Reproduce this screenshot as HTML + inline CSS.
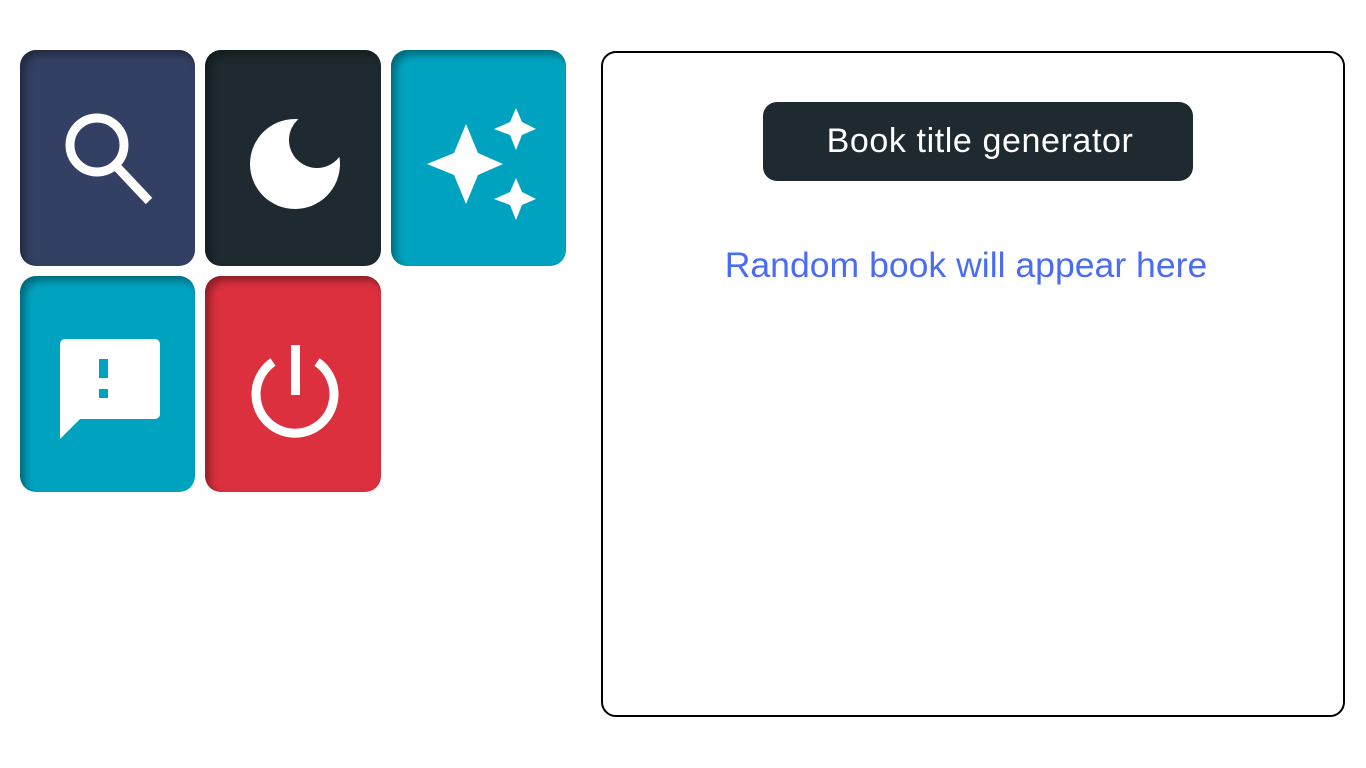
<!DOCTYPE html>
<html><head><meta charset="utf-8"><style>
body{margin:0;width:1366px;height:768px;background:#fff;position:relative;overflow:hidden;font-family:"Liberation Sans",sans-serif}
.t{position:absolute;width:175px;height:216px;border-radius:16px;box-shadow:inset 5px 5px 8px rgba(0,0,0,.35)}
.t svg{position:absolute;left:0;top:0}
.panel{position:absolute;left:601px;top:51px;width:740px;height:662px;border:2.5px solid #000;border-radius:15px}
.btn{position:absolute;left:763px;top:102px;width:430px;height:79px;background:#1e2a2f;border-radius:14px;color:#fff;font-size:34px;line-height:79px;text-align:center;letter-spacing:0.6px;text-indent:4px}
.msg{position:absolute;left:601px;width:730px;top:243px;text-align:center;color:#4a6cf5;font-size:35.6px;line-height:44px}
</style></head><body>
<div class="t" style="left:20px;top:50px;background:#344063">
<svg width="175" height="216"><circle cx="77" cy="95" r="27" fill="none" stroke="#fff" stroke-width="9"/><path d="M97 117 L129 151" stroke="#fff" stroke-width="9"/></svg></div>
<div class="t" style="left:205px;top:50px;width:176px;background:#1e2a2f">
<svg width="176" height="216"><circle cx="90" cy="114" r="45" fill="#fff"/><circle cx="112" cy="90" r="28" fill="#1e2a2f"/></svg></div>
<div class="t" style="left:391px;top:50px;background:#00a3bf">
<svg width="175" height="216"><path d="M75 74 L87 103 L112 114 L87 125 L75 154 L63 125 L36 114 L63 103Z M125 58 L131 72 L145 79 L131 85 L125 100 L119 85 L103 79 L119 72Z M125 128 L131 142 L145 149 L131 155 L125 170 L119 155 L103 149 L119 142Z" fill="#fff"/></svg></div>
<div class="t" style="left:20px;top:276px;background:#00a3bf">
<svg width="175" height="216"><path d="M45 63 H135 A5 5 0 0 1 140 68 V138 A5 5 0 0 1 135 143 H60 L40 163 V68 A5 5 0 0 1 45 63Z" fill="#fff"/><rect x="79" y="83" width="9" height="19" fill="#00a3bf"/><rect x="79" y="113" width="9" height="9" fill="#00a3bf"/></svg></div>
<div class="t" style="left:205px;top:276px;width:176px;background:#dc303f">
<svg width="176" height="216"><path d="M68 86 A39 39 0 1 0 112 86" fill="none" stroke="#fff" stroke-width="9"/><rect x="86" y="69" width="9" height="50" fill="#fff"/></svg></div>
<div class="panel"></div>
<div class="btn">Book title generator</div>
<div class="msg">Random book will appear here</div>
</body></html>
